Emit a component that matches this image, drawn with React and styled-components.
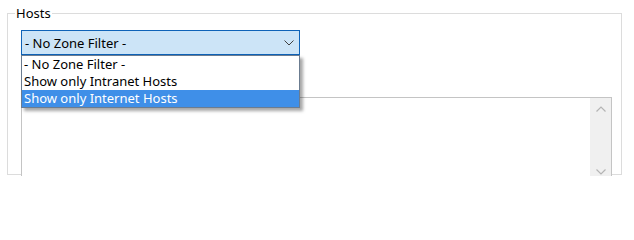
import React, { useState } from "react";
import styled, { createGlobalStyle } from "styled-components";

const options = [
  "- No Zone Filter -",
  "Show only Intranet Hosts",
  "Show only Internet Hosts",
];

export default function App() {
  const [selected] = useState(0);
  const [hover] = useState(2);

  return (
    <>
      <GlobalStyle />
      <Viewport>
        <GroupBox>
          <Legend>Hosts</Legend>
          <Content>
            <Combo>
              <ComboBox>
                <span>{options[selected]}</span>
                <Chevron viewBox="0 0 10 6">
                  <path d="M0.5 0.5 L5 5 L9.5 0.5" />
                </Chevron>
              </ComboBox>
              <DropList>
                {options.map((o, i) => (
                  <Item key={o} active={i === hover}>
                    {o}
                  </Item>
                ))}
              </DropList>
            </Combo>
            <ListBox>
              <ListBody />
              <ScrollBar>
                <ArrowButton>
                  <ScrollArrow viewBox="0 0 10 6">
                    <path d="M0.5 5.5 L5 1 L9.5 5.5" />
                  </ScrollArrow>
                </ArrowButton>
                <Track />
                <ArrowButton>
                  <ScrollArrow viewBox="0 0 10 6">
                    <path d="M0.5 0.5 L5 5 L9.5 0.5" />
                  </ScrollArrow>
                </ArrowButton>
              </ScrollBar>
            </ListBox>
          </Content>
        </GroupBox>
      </Viewport>
    </>
  );
}

const GlobalStyle = createGlobalStyle`
body {
    margin: 0;
    background: #ffffff;
    font-family: "Noto Sans", "Open Sans", sans-serif;
    font-size: 13px;
    color: #000;
}
`;

const Viewport = styled.div`
  height: 176px;
  overflow: hidden;
  padding: 5px 12px 0 7px;
  box-sizing: border-box;
`;

const GroupBox = styled.fieldset`
  margin: 0;
  padding: 0;
  border: 1px solid #dcdcdc;
  height: 170px;
  box-sizing: border-box;
  min-width: 0;
`;

const Legend = styled.legend`
  margin-left: 7px;
  padding: 0 1px;
  line-height: 16px;
`;

const Content = styled.div`
  padding: 9px 9px 0 13px;
`;

const Combo = styled.div`
  position: relative;
  width: 279px;
  z-index: 2;
`;

const ComboBox = styled.div`
  height: 25px;
  box-sizing: border-box;
  border: 1px solid #0f63b8;
  background: #cce4f7;
  display: flex;
  align-items: center;
  justify-content: space-between;
  padding: 0 5px 0 3px;
  line-height: 16px;
`;

const Chevron = styled.svg`
  width: 10px;
  height: 6px;
  fill: none;
  stroke: #404040;
  stroke-width: 1;
`;

const DropList = styled.div`
  position: absolute;
  top: 25px;
  left: 0;
  width: 279px;
  box-sizing: border-box;
  border: 1px solid #6b7c90;
  background: #fff;
  box-shadow: 3px 3px 3px rgba(0, 0, 0, 0.35);
`;

const Item = styled.div`
  height: 17px;
  line-height: 17px;
  padding-left: 2px;
  background: ${(p) => (p.active ? "#3f8fe8" : "transparent")};
  color: ${(p) => (p.active ? "#ffffff" : "#000")};
  white-space: nowrap;
`;

const ListBox = styled.div`
  margin-top: 42px;
  height: 84px;
  border: 1px solid #c4c4c4;
  display: flex;
  background: #fff;
`;

const ListBody = styled.div`
  flex: 1;
`;

const ScrollBar = styled.div`
  width: 21px;
  background: #f0f0f0;
  display: flex;
  flex-direction: column;
`;

const ArrowButton = styled.div`
  height: 21px;
  display: flex;
  align-items: center;
  justify-content: center;
`;

const Track = styled.div`
  flex: 1;
`;

const ScrollArrow = styled.svg`
  width: 10px;
  height: 6px;
  fill: none;
  stroke: #b4b4b4;
  stroke-width: 1.2;
`;
